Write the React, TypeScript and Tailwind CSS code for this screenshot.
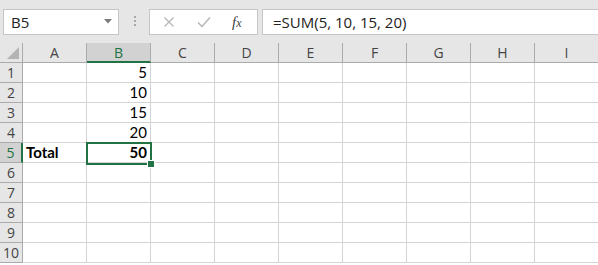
import React from "react"

const cols = ["A", "B", "C", "D", "E", "F", "G", "H", "I"]
const rows = [1, 2, 3, 4, 5, 6, 7, 8, 9, 10]

const values: Record<string, { text: string; bold?: boolean; right?: boolean }> = {
  B1: { text: "5", right: true },
  B2: { text: "10", right: true },
  B3: { text: "15", right: true },
  B4: { text: "20", right: true },
  A5: { text: "Total", bold: true },
  B5: { text: "50", bold: true, right: true },
}

function FormulaBar() {
  return (
    <div className="flex h-[43px] items-start bg-[#e6e6e6] pt-[9px]">
      {/* name box */}
      <div className="ml-[3px] flex h-[26px] w-[116px] items-center justify-between border border-[#c6c6c6] bg-white pl-[7px] pr-[6px]">
        <span className="text-[15px] text-[#222]" style={{ fontFamily: "'Open Sans', sans-serif" }}>B5</span>
        <svg width="8" height="5" viewBox="0 0 8 5" className="mb-[1px]">
          <path d="M0 0 L8 0 L4 4.5 Z" fill="#7a7a7a" />
        </svg>
      </div>
      {/* grip dots */}
      <div className="ml-[15px] mt-[7px] flex w-[3px] flex-col gap-[2px]">
        <div className="h-[2px] w-[2px] bg-[#a8a8a8]" />
        <div className="h-[2px] w-[2px] bg-[#a8a8a8]" />
        <div className="h-[2px] w-[2px] bg-[#a8a8a8]" />
      </div>
      {/* cancel / enter / fx */}
      <div className="ml-[12px] flex h-[26px] w-[109px] items-center border border-[#c6c6c6] bg-white">
        <svg width="12" height="12" viewBox="0 0 12 12" className="ml-[13px]">
          <path d="M1.5 1.5 L10.5 10.5 M10.5 1.5 L1.5 10.5" stroke="#b5b5b5" strokeWidth="1.3" />
        </svg>
        <svg width="14" height="12" viewBox="0 0 14 12" className="ml-[22px]">
          <path d="M1 6.5 L5 10.5 L13 1.5" stroke="#b5b5b5" strokeWidth="1.4" fill="none" />
        </svg>
        <span
          className="ml-[21px] text-[15px] italic text-[#444]"
          style={{ fontFamily: "'Liberation Serif', serif" }}
        >
          f<span className="text-[12px]">x</span>
        </span>
      </div>
      {/* formula input */}
      <div className="ml-[4px] flex h-[26px] flex-1 items-center border border-r-0 border-[#c6c6c6] bg-white pl-[10px]">
        <span className="text-[15px] text-[#222]" style={{ fontFamily: "'Open Sans', sans-serif" }}>
          =SUM(5, 10, 15, 20)
        </span>
      </div>
    </div>
  )
}

function Grid() {
  return (
    <div className="grid grid-cols-[23px_repeat(9,64px)] grid-rows-[20px_repeat(10,20px)] bg-white">
      {/* corner */}
      <div className="relative border-b border-r border-[#ababab] bg-[#e6e6e6]">
        <svg width="12" height="12" viewBox="0 0 12 12" className="absolute bottom-[3px] right-[3px]">
          <path d="M12 0 L12 12 L0 12 Z" fill="#b4b4b4" />
        </svg>
      </div>
      {cols.map((c) => (
        <div
          key={c}
          className={
            c === "B"
              ? "flex items-center justify-center border-b-2 border-r border-b-[#217346] border-r-[#ababab] bg-[#d2d2d2] pt-[1px] text-[14px] text-[#217346]"
              : "flex items-center justify-center border-b border-r border-[#ababab] bg-[#e6e6e6] text-[14px] text-[#444]"
          }
          style={{ fontFamily: "'Open Sans', sans-serif" }}
        >
          {c}
        </div>
      ))}
      {rows.map((r) => (
        <React.Fragment key={r}>
          <div
            className={
              r === 5
                ? "flex items-center justify-center border-b border-r-2 border-b-[#ababab] border-r-[#217346] bg-[#d2d2d2] text-[14px] text-[#217346]"
                : "flex items-center justify-center border-b border-r border-[#ababab] bg-[#e6e6e6] text-[14px] text-[#444]"
            }
            style={{ fontFamily: "'Open Sans', sans-serif" }}
          >
            {r}
          </div>
          {cols.map((c) => {
            const v = values[c + r]
            const selected = c === "B" && r === 5
            return (
              <div
                key={c}
                className={
                  "relative flex items-center border-b border-r border-[#d4d4d4] px-[3px] text-[15px] text-black " +
                  (v?.right ? "justify-end " : "justify-start ") +
                  (v?.bold ? "font-bold" : "")
                }
                style={{ fontFamily: "Lato, 'Open Sans', sans-serif" }}
              >
                {selected && (
                  <div className="absolute -left-[1px] -top-[1px] z-10 h-[23px] w-[66px] border-2 border-[#217346]">
                    <div className="absolute -bottom-[5px] -right-[5px] h-[8px] w-[8px] border border-white bg-[#217346]" />
                  </div>
                )}
                <span className="relative">{v?.text}</span>
              </div>
            )
          })}
        </React.Fragment>
      ))}
    </div>
  )
}

export default function App() {
  return (
    <div className="h-[265px] w-[598px] overflow-hidden bg-white">
      <FormulaBar />
      <Grid />
    </div>
  )
}
